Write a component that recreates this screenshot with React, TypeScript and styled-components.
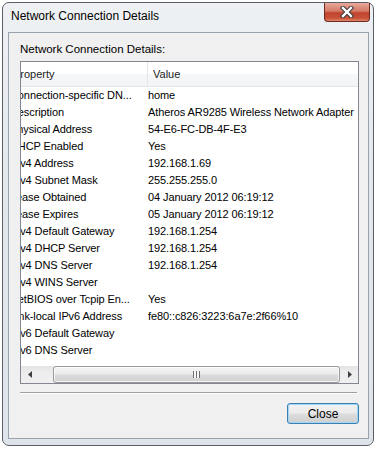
import styled, { createGlobalStyle } from 'styled-components'

const rows: [string, string][] = [
  ['Connection-specific DN...', 'home'],
  ['Description', 'Atheros AR9285 Wireless Network Adapter'],
  ['Physical Address', '54-E6-FC-DB-4F-E3'],
  ['DHCP Enabled', 'Yes'],
  ['IPv4 Address', '192.168.1.69'],
  ['IPv4 Subnet Mask', '255.255.255.0'],
  ['Lease Obtained', '04 January 2012 06:19:12'],
  ['Lease Expires', '05 January 2012 06:19:12'],
  ['IPv4 Default Gateway', '192.168.1.254'],
  ['IPv4 DHCP Server', '192.168.1.254'],
  ['IPv4 DNS Server', '192.168.1.254'],
  ['IPv4 WINS Server', ''],
  ['NetBIOS over Tcpip En...', 'Yes'],
  ['Link-local IPv6 Address', 'fe80::c826:3223:6a7e:2f66%10'],
  ['IPv6 Default Gateway', ''],
  ['IPv6 DNS Server', ''],
]

export default function App() {
  return (
    <>
      <GlobalStyle />
      <Window>
        {/* Title bar */}
        <TitleBar>
          <Title>Network Connection Details</Title>
          <CaptionClose>
            <svg width="16" height="12" viewBox="0 0 16 12">
              <path d="M4 2 L12 10 M12 2 L4 10" stroke="#3a3a3a" strokeWidth="4.4" strokeLinecap="square" />
              <path d="M4 2 L12 10 M12 2 L4 10" stroke="#fff" strokeWidth="2.4" strokeLinecap="square" />
            </svg>
          </CaptionClose>
        </TitleBar>

        {/* Dialog body */}
        <Client>
          <GroupLabel>Network Connection Details:</GroupLabel>
          <ListView>
            <Viewport>
              <Content>
                <Header>
                  <HeadCell $first>Property</HeadCell>
                  <HeadCell>Value</HeadCell>
                </Header>
                {rows.map(([k, v]) => (
                  <Row key={k}>
                    <Cell $first>{k}</Cell>
                    <Cell>{v}</Cell>
                  </Row>
                ))}
              </Content>
            </Viewport>
            <HScroll>
              <ArrowBtn>
                <svg width="4" height="7" viewBox="0 0 4 7"><path d="M4 0 L0 3.5 L4 7 Z" fill="#404040" /></svg>
              </ArrowBtn>
              <Track>
                <Thumb>
                  <Grip />
                </Thumb>
              </Track>
              <ArrowBtn>
                <svg width="4" height="7" viewBox="0 0 4 7"><path d="M0 0 L4 3.5 L0 7 Z" fill="#404040" /></svg>
              </ArrowBtn>
            </HScroll>
          </ListView>
          <Separator />
          <Footer>
            <Button>Close</Button>
          </Footer>
        </Client>
      </Window>
    </>
  )
}

const GlobalStyle = createGlobalStyle`
  body {
    margin: 0;
    background: #fff;
    font-family: "Liberation Sans", Arial, sans-serif;
  }
`

const Window = styled.div`
  margin: 2px 0 0 2px;
  width: 372px;
  height: 444px;
  box-sizing: border-box;
  border: 1px solid #5a5f66;
  border-radius: 7px;
  background: linear-gradient(180deg, #eef1f4 0%, #e3e8ed 40%, #dfe4ea 100%);
  display: flex;
  flex-direction: column;
  padding: 0 4px 6px 5px;
`

const TitleBar = styled.div`
  height: 29px;
  display: flex;
  justify-content: space-between;
  align-items: flex-start;
  padding-left: 3px;
`

const Title = styled.div`
  margin-top: 6px;
  font-size: 12px;
  line-height: 15px;
  color: #000;
  text-shadow: 0 0 6px rgba(255, 255, 255, 0.9);
`

const CaptionClose = styled.div`
  width: 46px;
  height: 19px;
  margin-right: -1px;
  box-sizing: border-box;
  border: 1px solid #6b2b22;
  border-top: none;
  border-radius: 0 0 4px 4px;
  background: linear-gradient(180deg, #e9a99b 0%, #d47a66 45%, #c0442e 55%, #c9533a 85%, #e08a6a 100%);
  display: flex;
  align-items: center;
  justify-content: center;
`

const Client = styled.div`
  flex: 1;
  border: 1px solid #9aa3ad;
  background: #f0f0f0;
  display: flex;
  flex-direction: column;
  padding: 9px 9px 0 11px;
`

const GroupLabel = styled.div`
  font-size: 11.5px;
  line-height: 14px;
  color: #000;
`

const ListView = styled.div`
  margin-top: 5px;
  height: 323px;
  box-sizing: border-box;
  border: 1px solid #828790;
  background: #fff;
  display: flex;
  flex-direction: column;
`

const Viewport = styled.div`
  flex: 1;
  overflow: hidden;
`

const Content = styled.div`
  margin-left: -14px;
  width: 420px;
`

const Header = styled.div`
  height: 24px;
  display: flex;
  border-bottom: 1px solid #e5e5e5;
  background: linear-gradient(180deg, #ffffff 0%, #ffffff 50%, #f6f7f9 50%, #f3f4f6 100%);
`

const HeadCell = styled.div<{ $first?: boolean }>`
  width: ${p => (p.$first ? '134px' : 'auto')};
  flex: ${p => (p.$first ? 'none' : '1')};
  border-right: ${p => (p.$first ? '1px solid #e2e5ea' : 'none')};
  padding-left: ${p => (p.$first ? '6px' : '5px')};
  box-sizing: content-box;
  font-size: 11px;
  line-height: 24px;
  color: #1c1c1c;
  white-space: nowrap;
  overflow: hidden;
`

const Row = styled.div`
  height: 17px;
  display: flex;
`

const Cell = styled.div<{ $first?: boolean }>`
  width: ${p => (p.$first ? '132px' : 'auto')};
  flex: ${p => (p.$first ? 'none' : '1')};
  padding-left: ${p => (p.$first ? '3px' : '6px')};
  font-size: 11px;
  line-height: 17px;
  letter-spacing: -0.1px;
  color: #000;
  white-space: nowrap;
  overflow: hidden;
`

const HScroll = styled.div`
  height: 17px;
  display: flex;
  background: linear-gradient(180deg, #e3e3e3 0%, #ececec 30%, #f0f0f0 100%);
`

const ArrowBtn = styled.div`
  width: 17px;
  display: flex;
  align-items: center;
  justify-content: center;
`

const Track = styled.div`
  flex: 1;
  display: flex;
  padding: 0 1px 0 15px;
`

const Thumb = styled.div`
  flex: 1;
  box-sizing: border-box;
  border: 1px solid #9a9a9a;
  border-radius: 3px;
  background: linear-gradient(180deg, #f4f4f4 0%, #ebebeb 45%, #dadada 55%, #d2d2d2 100%);
  box-shadow: inset 0 0 0 1px rgba(255, 255, 255, 0.7);
  display: flex;
  align-items: center;
  justify-content: center;
`

const Grip = styled.div`
  width: 7px;
  height: 7px;
  background: repeating-linear-gradient(90deg, #6e6e6e 0 1px, #f6f6f6 1px 3px);
`

const Separator = styled.div`
  margin: 8px 2px 0 0;
  height: 1px;
  background: #a0a0a0;
  border-bottom: 1px solid #fff;
`

const Footer = styled.div`
  display: flex;
  justify-content: flex-end;
  margin-top: 9px;
`

const Button = styled.button`
  width: 72px;
  height: 21px;
  box-sizing: border-box;
  border: 1px solid #3c7fb1;
  border-radius: 3px;
  background: linear-gradient(180deg, #f2f2f2 0%, #ebebeb 48%, #dddddd 52%, #cfcfcf 100%);
  box-shadow: inset 0 0 0 1px #9fd6f6;
  font-family: "Liberation Sans", Arial, sans-serif;
  font-size: 12px;
  color: #000;
  padding: 0;
`
